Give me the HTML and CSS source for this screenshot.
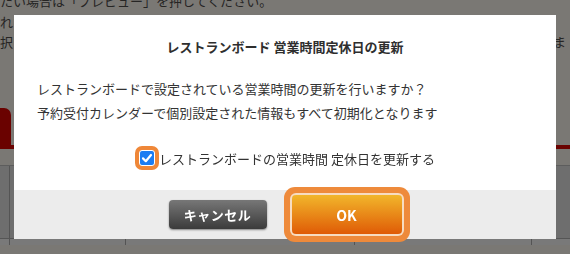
FILE: index.html
```html
<!DOCTYPE html>
<html lang="ja">
<head>
    <meta charset="UTF-8">
    <meta name="viewport" content="width=device-width, initial-scale=1.0">
    <title>営業時間定休日の更新</title>
    <link rel="stylesheet" href="styles.css">
</head>
<body>
    <div class="page">
        <div class="notice">
            <p class="notice-line">たい場合は「プレビュー」を押してください。</p>
            <p class="notice-line">れた</p>
            <p class="notice-line notice-split">
                <span>択し</span>
                <span class="notice-end">ま</span>
            </p>
        </div>

        <div class="tabs">
            <div class="tab"></div>
        </div>

        <div class="grid-head">
            <div class="grid-cell first"></div>
            <div class="grid-cell"></div>
        </div>
        <div class="grid-row">
            <div class="grid-cell first"></div>
            <div class="grid-cell col-a"></div>
            <div class="grid-cell col-b"></div>
            <div class="grid-cell col-c"></div>
            <div class="grid-cell col-d"></div>
        </div>
    </div>

    <div class="modal">
        <h2 class="modal-title">レストランボード 営業時間定休日の更新</h2>
        <div class="modal-body">
            <p>レストランボードで設定されている営業時間の更新を行いますか？</p>
            <p>予約受付カレンダーで個別設定された情報もすべて初期化となります</p>
        </div>
        <label class="modal-check">
            <span class="check-ring">
                <span class="check-box">
                    <svg width="14" height="14" viewBox="0 0 14 14">
                        <path d="M3 7.4 L5.8 10.2 L11 4" fill="none" stroke="#fff" stroke-width="2.2" stroke-linecap="round" stroke-linejoin="round"/>
                    </svg>
                </span>
            </span>
            <span>レストランボードの営業時間 定休日を更新する</span>
        </label>
        <div class="modal-footer">
            <button class="cancel-btn">キャンセル</button>
            <button class="ok-btn">OK</button>
        </div>
    </div>
</body>
</html>
```

FILE: styles.css
```css
body {
    margin: 0;
    font-family: "Noto Sans CJK JP", "Noto Sans", sans-serif;
    background-color: #7a7874;
    overflow: hidden;
}

.page {
    width: 570px;
    height: 254px;
}

.notice {
    margin-top: -9px;
    color: #262524;
    font-size: 13px;
}

.notice-line {
    margin: 0;
    line-height: 20.5px;
    white-space: nowrap;
}

.notice-split {
    display: flex;
    justify-content: space-between;
}

.notice-end {
    padding-right: 4px;
}

.tabs {
    height: 37px;
    margin-top: 55px;
    border-bottom: 4px solid #6a0200;
    display: flex;
    align-items: flex-end;
}

.tab {
    width: 11px;
    height: 37px;
    background: #6a0200;
    border-top-right-radius: 7px;
}

.grid-head {
    margin-top: 16px;
    height: 72px;
    background: #6e6e6e;
    border-top: 1px solid #5d5d5d;
    border-bottom: 1px solid #555;
    display: flex;
}

.grid-row {
    height: 16px;
    background: #797979;
    display: flex;
}

.grid-cell {
    border-right: 1px solid #545454;
}

.grid-head .grid-cell:last-child {
    border-right: none;
}

.first {
    width: 9px;
}

.col-a {
    width: 115px;
}

.col-b {
    width: 228px;
}

.col-c {
    width: 176px;
}

.col-d {
    flex: 1;
    border-right: none;
}

/* dialog */
.modal {
    position: fixed;
    top: 15px;
    left: 14px;
    width: 542px;
    height: 224px;
    background: #fff;
    display: flex;
    flex-direction: column;
    color: #333;
}

.modal-title {
    margin: 23px 0 0;
    font-size: 13px;
    line-height: 18px;
    text-align: center;
    font-weight: bold;
    color: #2e2e2e;
}

.modal-body {
    margin-top: 21px;
    padding: 0 23px;
    font-size: 13px;
}

.modal-body p {
    margin: 0;
    line-height: 24px;
}

.modal-check {
    margin-top: 21px;
    height: 24px;
    display: flex;
    justify-content: center;
    align-items: center;
    font-size: 13px;
}

.check-ring {
    width: 24px;
    height: 24px;
    border-radius: 7px;
    background: #ef8738;
    display: flex;
    justify-content: center;
    align-items: center;
}

.check-box {
    width: 14px;
    height: 14px;
    border: 1px solid #fff;
    border-radius: 3px;
    background: #1b7cf2;
    display: flex;
}

.modal-footer {
    margin-top: auto;
    height: 49px;
    background: #ececec;
    display: flex;
    justify-content: center;
    align-items: center;
    gap: 25px;
}

.cancel-btn, .ok-btn {
    font-family: inherit;
    font-weight: bold;
    color: #fff;
    border: none;
    cursor: pointer;
    padding: 0;
}

.cancel-btn {
    width: 98px;
    height: 29px;
    font-size: 13px;
    letter-spacing: 0.5px;
    border-radius: 4px;
    background: linear-gradient(#777, #3b3b3b);
    box-shadow: 0 1px 2px rgba(0, 0, 0, 0.45);
}

.ok-btn {
    width: 110px;
    height: 39px;
    font-size: 14px;
    border-radius: 4px;
    background: linear-gradient(#f2b62b, #df5b06);
    box-shadow: 0 0 0 2px #f7dcc1, 0 0 0 8px #ee8a3b;
}
```
